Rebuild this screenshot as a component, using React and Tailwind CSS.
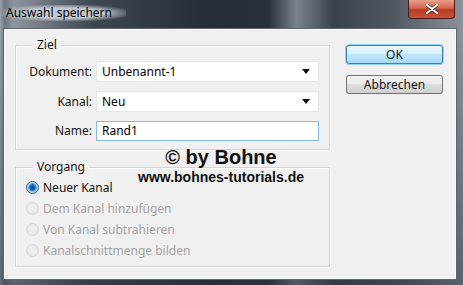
import React from 'react';

const Dropdown = ({ value }) => (
    <div className="h-[21px] w-[223px] bg-white border border-[#e6e6e6] flex items-center justify-between pl-[5px] pr-[8px]">
        <span>{value}</span>
        <svg width="8" height="5" viewBox="0 0 8 5"><path d="M0 0 L8 0 L4 5 Z" fill="#111" /></svg>
    </div>
);

const Radio = ({ label, checked, disabled }) => (
    <div className="h-[21px] flex items-center gap-[4px]">
        {checked ? (
            <span className="w-[13px] h-[13px] rounded-full border border-[#2c628b] bg-[radial-gradient(circle,#0a3f7a_0%,#1d6fc0_35%,#a8d4f5_60%,#e7f3fc_100%)]"></span>
        ) : (
            <span className="w-[13px] h-[13px] rounded-full border border-[#d9d9d9] bg-[radial-gradient(circle,#f2f2f2_0%,#e4e4e4_100%)]"></span>
        )}
        <span className={disabled ? 'text-[#a3a3a3]' : 'text-[#151515]'}>{label}</span>
    </div>
);

const GroupBox = ({ title, className, children }) => (
    <div className={`relative border border-[#d5d5d5] shadow-[inset_1px_1px_0_#fff,1px_1px_0_#fff] ${className}`}>
        <span className="absolute -top-[9px] left-[17px] px-[4px] bg-[#f0f0f0] leading-[16px] text-[#151515]">{title}</span>
        {children}
    </div>
);

export default function App() {
    return (
        <div className="w-[463px] h-[285px] flex flex-col bg-[linear-gradient(90deg,#9aa3ad_0%,#6d7682_1%,#8e959e_3%,#3e4650_20%,#262d37_45%,#2a313b_58%,#7a828c_64%,#3a424c_72%,#50575f_85%,#8c939c_100%)] font-['Noto_Sans',sans-serif] text-[12px] overflow-hidden">
            {/* Title bar */}
            <div className="h-[28px] flex items-start justify-between">
                <div className="mt-[5px] ml-[3px] pl-[3px] pr-[14px] text-[12px] leading-[16px] text-black bg-[radial-gradient(ellipse_at_center,rgba(205,211,219,0.9)_45%,rgba(160,168,178,0)_80%)]">
                    Auswahl speichern
                </div>
                <div className="w-[47px] h-[19px] mr-[8px] rounded-b-[4px] border border-t-0 border-[#4a1a14] bg-[linear-gradient(180deg,#e8a08e_0%,#d2654c_45%,#b83a22_55%,#c9573c_100%)] flex items-center justify-center">
                    <svg width="12" height="10" viewBox="0 0 12 10">
                        <path d="M1 1 L11 9 M11 1 L1 9" stroke="#3a1a14" strokeWidth="3.4" strokeLinecap="round" />
                        <path d="M1 1 L11 9 M11 1 L1 9" stroke="#fff" strokeWidth="2.2" strokeLinecap="round" />
                    </svg>
                </div>
            </div>

            {/* Frame + client area */}
            <div className="flex-1 flex pl-[3px] pr-[6px] pb-[5px] bg-[linear-gradient(180deg,rgba(0,0,0,0)_0%,rgba(40,50,66,0.5)_100%)]">
                <div className="relative flex-1 flex bg-[#f0f0f0] border border-[#5b6470] shadow-[inset_0_0_0_1px_#fafafa]">
                    {/* Left column with group boxes */}
                    <div className="ml-[11px] mt-[16px] w-[315px] flex flex-col gap-[17px]">
                        <GroupBox title="Ziel" className="h-[105px] pt-[15px]">
                            <div className="grid grid-cols-[76px_223px] gap-x-[4px] gap-y-[9px] items-center">
                                <span className="text-right text-[#151515]">Dokument:</span>
                                <Dropdown value="Unbenannt-1" />
                                <span className="text-right text-[#151515]">Kanal:</span>
                                <Dropdown value="Neu" />
                                <span className="text-right text-[#151515]">Name:</span>
                                <div className="h-[20px] w-[223px] bg-white border border-[#86b8e8] flex items-center pl-[5px]">
                                    <span>Rand1</span>
                                </div>
                            </div>
                        </GroupBox>
                        <GroupBox title="Vorgang" className="h-[100px] pt-[9px] pl-[10px]">
                            <Radio label="Neuer Kanal" checked />
                            <Radio label="Dem Kanal hinzufügen" disabled />
                            <Radio label="Von Kanal subtrahieren" disabled />
                            <Radio label="Kanalschnittmenge bilden" disabled />
                        </GroupBox>
                    </div>

                    {/* Buttons */}
                    <div className="ml-[16px] mt-[16px] flex flex-col gap-[11px]">
                        <button className="w-[97px] h-[19px] rounded-[3px] border border-[#3c7fb1] shadow-[0_0_0_1px_#8fd0f7] bg-[linear-gradient(180deg,#eaf6fd_0%,#d9f0fc_45%,#bee6fd_50%,#a7d9f5_100%)] text-[#151515] leading-[16px]">
                            OK
                        </button>
                        <button className="w-[97px] h-[19px] rounded-[3px] border border-[#707070] bg-[linear-gradient(180deg,#f2f2f2_0%,#ebebeb_45%,#dddddd_50%,#cfcfcf_100%)] text-[#151515] leading-[16px]">
                            Abbrechen
                        </button>
                    </div>

                    {/* Watermark */}
                    <div className="absolute top-[118px] left-[129px] w-[176px] text-center font-['Liberation_Sans',Arial,sans-serif] font-bold text-[#111]">
                        <div className="text-[20px] leading-[20px]">© by Bohne</div>
                        <div className="text-[14px] leading-[20px]">www.bohnes-tutorials.de</div>
                    </div>
                </div>
            </div>
        </div>
    );
}
